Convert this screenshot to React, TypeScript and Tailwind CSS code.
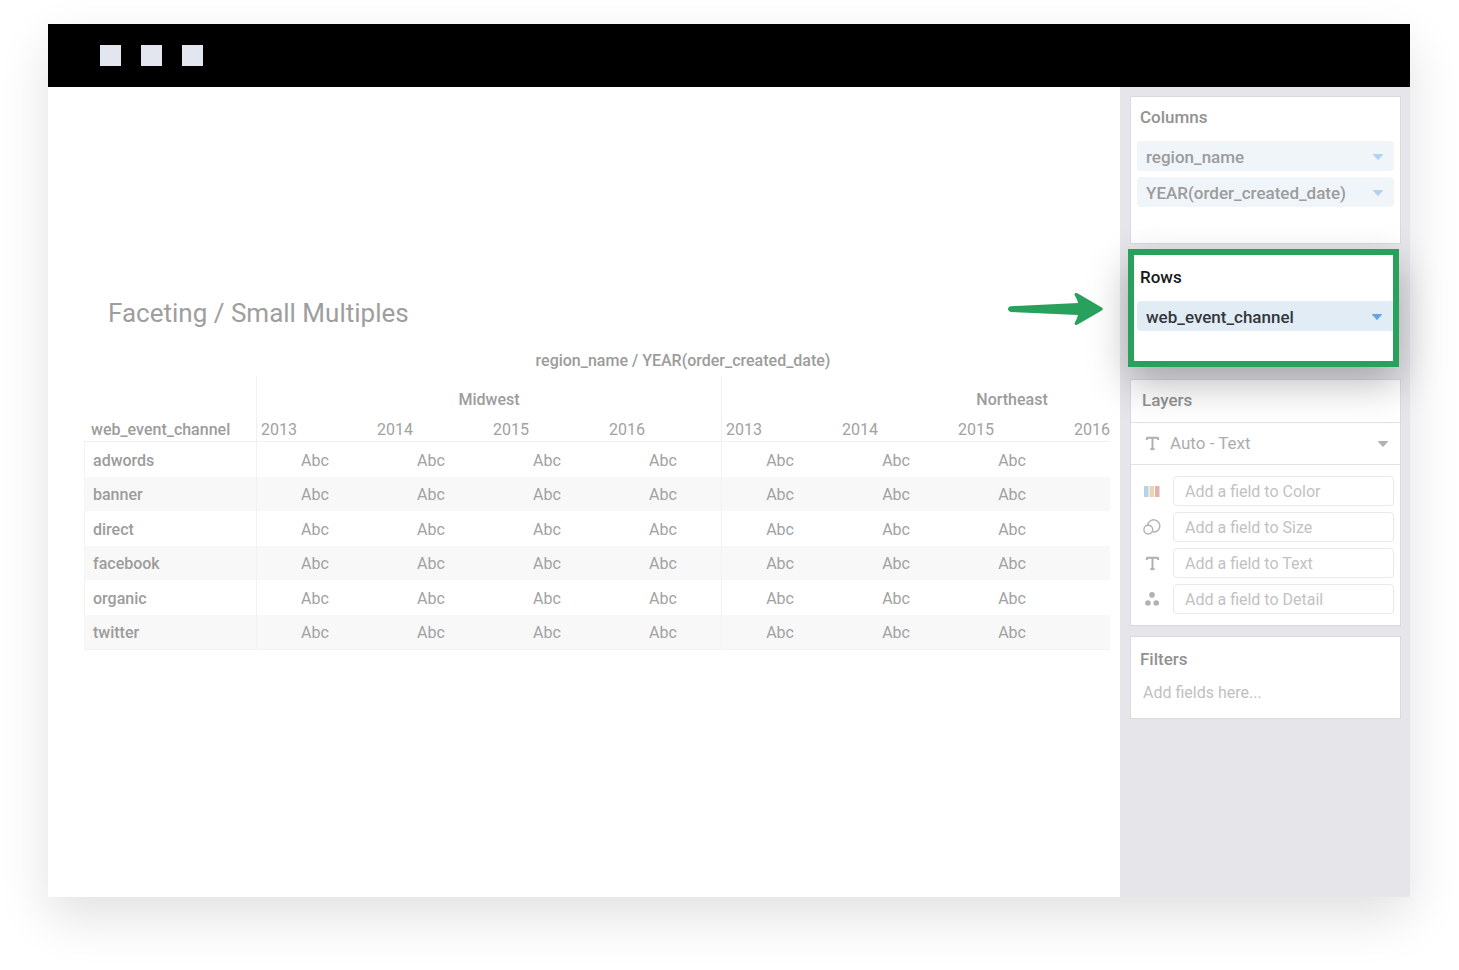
import type { ReactNode } from 'react';
import { Type } from 'lucide-react';

const channels = ['adwords', 'banner', 'direct', 'facebook', 'organic', 'twitter'];

// columns without a year or a mark keep their width but stay empty
const regions = [
  {
    name: 'Midwest',
    columns: [
      { year: '2013', mark: 'Abc' },
      { year: '2014', mark: 'Abc' },
      { year: '2015', mark: 'Abc' },
      { year: '2016', mark: 'Abc' },
    ],
  },
  {
    name: 'Northeast',
    columns: [
      { year: '2013', mark: 'Abc' },
      { year: '2014', mark: 'Abc' },
      { year: '2015', mark: 'Abc' },
      { year: '2016', mark: '' },
      { year: '', mark: '' },
    ],
  },
];

function Caret({ className }: { className: string }) {
  return (
    <svg viewBox="0 0 10 6" className={`h-[6px] w-[10px] shrink-0 ${className}`} fill="currentColor" aria-hidden="true">
      <path d="M0.4 0h9.2c.4 0 .5.4.3.7L5.6 5.6c-.3.4-.9.4-1.2 0L.1.7C-.1.4 0 0 .4 0z" />
    </svg>
  );
}

function TextIcon() {
  return <Type size={17} strokeWidth={2.8} strokeLinecap="butt" strokeLinejoin="miter" className="text-[#b0b0b3]" aria-hidden="true" />;
}

function ColorIcon() {
  return (
    <svg viewBox="0 0 16 11" className="h-[11px] w-4" aria-hidden="true">
      <rect x="0" width="4.5" height="11" rx="0.5" fill="#b5d3e8" />
      <rect x="5.5" width="4.5" height="11" rx="0.5" fill="#ecd5ac" />
      <rect x="11" width="4.5" height="11" rx="0.5" fill="#e6b0ac" />
    </svg>
  );
}

function SizeIcon() {
  return (
    <svg viewBox="0 0 18 16" className="h-4 w-[18px]" fill="none" stroke="#b2b2b5" strokeWidth="1.4" aria-hidden="true">
      <path d="M4.6 6.4A6.1 6.1 0 1 1 9.6 12.9" />
      <circle cx="5.3" cy="10.6" r="4.4" />
    </svg>
  );
}

function DetailIcon() {
  return (
    <svg viewBox="0 0 14 14" className="h-[14px] w-[14px]" fill="#b2b2b5" aria-hidden="true">
      <circle cx="7" cy="2.9" r="2.8" />
      <circle cx="2.9" cy="11" r="2.8" />
      <circle cx="11.2" cy="11" r="2.8" />
    </svg>
  );
}

const layerFields: { name: string; icon: ReactNode }[] = [
  { name: 'Color', icon: <ColorIcon /> },
  { name: 'Size', icon: <SizeIcon /> },
  { name: 'Text', icon: <TextIcon /> },
  { name: 'Detail', icon: <DetailIcon /> },
];

function FieldPill({ label, active = false }: { label: string; active?: boolean }) {
  return (
    <button
      type="button"
      className={`flex h-[30px] w-full items-center justify-between rounded pt-[2px] pr-[11px] pl-[9px] text-[17px] leading-5 font-medium ${
        active ? 'rounded-r-none bg-[#e2ecf4] text-[#33373c]' : 'bg-[#f0f5f9] text-[#9b9c9e]'
      }`}
    >
      <span>{label}</span>
      <Caret className={active ? 'text-[#62a4e8]' : 'text-[#b2d2f4]'} />
    </button>
  );
}

function PivotTable() {
  return (
    <div className="overflow-hidden">
      <table className="w-[1218px] table-fixed border-separate border-spacing-0 text-base leading-5 text-[#a2a2a2]">
        <colgroup>
          <col className="w-[172px]" />
          {regions.map((region) =>
            region.columns.map((_, i) => (
              <col key={`${region.name}-${i}`} className={i === 0 ? 'w-[117px]' : 'w-[116px]'} />
            ))
          )}
        </colgroup>
        <thead>
          <tr className="h-[38px]">
            <td />
            {regions.map((region) => (
              <th
                key={region.name}
                scope="colgroup"
                colSpan={region.columns.length}
                className="border-l border-[#f2f2f3] pb-1 align-bottom font-medium text-[#9c9c9c]"
              >
                {region.name}
              </th>
            ))}
          </tr>
          <tr className="h-7">
            <th scope="col" className="border-b border-[#f0f0f1] pb-px pl-[7px] text-left align-bottom font-medium text-[#9c9c9c]">
              web_event_channel
            </th>
            {regions.map((region) =>
              region.columns.map((column, i) => (
                <th
                  key={`${region.name}-${i}`}
                  scope="col"
                  className={`border-b border-[#f0f0f1] pb-px pl-1 text-left align-bottom font-normal ${i === 0 ? 'border-l' : ''}`}
                >
                  {column.year}
                </th>
              ))
            )}
          </tr>
        </thead>
        <tbody>
          {channels.map((channel) => (
            <tr key={channel} className="h-[34px] odd:h-[35px] even:bg-[#f8f8f9]">
              <th scope="row" className="border-l border-[#f2f2f3] pt-[2px] pl-2 text-left font-medium text-[#9c9c9c]">
                {channel}
              </th>
              {regions.map((region) =>
                region.columns.map((column, i) => (
                  <td
                    key={`${region.name}-${i}`}
                    className={`border-[#f2f2f3] pt-[2px] text-center ${i === 0 ? 'border-l' : ''}`}
                  >
                    {column.mark}
                  </td>
                ))
              )}
            </tr>
          ))}
        </tbody>
      </table>
      <div className="h-px bg-[#f2f2f3]" />
    </div>
  );
}

function Arrow() {
  return (
    <svg
      viewBox="0 0 95 32"
      className="absolute top-[38px] right-full mr-[31px] h-8 w-[95px]"
      fill="#28a15c"
      aria-hidden="true"
    >
      <path d="M3 13.2L70 9.9C69.400 7.200 68.200 4.800 66.800 2.600C65.700 .8 67.500-.6 69.400.3L93.800 14.600C95.200 15.400 95.200 16.800 93.800 17.600L69.600 31.600C67.600 32.700 65.900 31.300 67 29.300C68.300 27 69.300 24.700 69.900 22L3 18.900C-1 18.400-1 13.600 3 13.200Z" />
    </svg>
  );
}

function Sidebar() {
  return (
    <aside className="flex w-[290px] shrink-0 flex-col bg-[#e5e5ea] pt-[9px] pr-[9px] pl-[10px]">
      <section className="border border-[#d9d9df] bg-white px-[6px] pt-[10px] pb-9">
        <h2 className="px-[3px] text-[17px] leading-5 font-medium text-[#929292]">Columns</h2>
        <div className="mt-[14px] flex flex-col gap-[6px]">
          <FieldPill label="region_name" />
          <FieldPill label="YEAR(order_created_date)" />
        </div>
      </section>

      {/* highlighted shelf, its shadow falls over the panels below */}
      <section className="relative mt-[5px] mr-[2px] -ml-[2px] border-[6px] border-[#28a15c] bg-white pt-3 pb-[30px] pl-[3px] shadow-[0_16px_40px_rgba(0,0,0,0.28)]">
        <h2 className="px-[3px] text-[17px] leading-5 font-medium text-[#17181a]">Rows</h2>
        <div className="mt-[14px]">
          <FieldPill label="web_event_channel" active />
        </div>
        <Arrow />
      </section>

      <section className="mt-3 border border-[#d9d9df] bg-white">
        <h2 className="border-b border-[#e2e2e4] px-[11px] pt-[10px] pb-3 text-[17px] leading-5 font-medium text-[#929292]">
          Layers
        </h2>
        <div className="relative flex h-[42px] items-center border-b border-[#e2e2e4]">
          <span className="absolute left-[13px] flex">
            <TextIcon />
          </span>
          <select
            aria-label="Layer type"
            className="h-full w-full appearance-none bg-transparent pb-[2px] pl-[39px] text-[17px] leading-5 text-[#adadad]"
          >
            <option>Auto - Text</option>
          </select>
          <span className="pointer-events-none absolute right-3 flex">
            <Caret className="text-[#b2b2b4]" />
          </span>
        </div>
        <div className="flex flex-col gap-[6px] py-[11px] pr-[6px]">
          {layerFields.map((field) => (
            <label key={field.name} className="flex items-center">
              <span className="flex w-[42px] justify-center">{field.icon}</span>
              <input
                type="text"
                aria-label={field.name}
                placeholder={`Add a field to ${field.name}`}
                className="h-[30px] min-w-0 flex-1 rounded-sm border border-[#e9e9eb] bg-white px-[11px] text-base leading-5 placeholder:text-[#c2c2c4]"
              />
            </label>
          ))}
        </div>
      </section>

      <section className="mt-[10px] border border-[#d9d9df] bg-white px-[9px] pt-3 pb-[14px]">
        <h2 className="text-[17px] leading-5 font-medium text-[#929292]">
          <label htmlFor="filters">Filters</label>
        </h2>
        <input
          id="filters"
          type="text"
          placeholder="Add fields here..."
          className="mt-[11px] block h-6 w-full bg-transparent px-[3px] text-base leading-5 placeholder:text-[#bfbfc1]"
        />
      </section>
    </aside>
  );
}

export default function App() {
  return (
    <div className="flex min-h-screen flex-col bg-white pt-6 pr-[49px] pb-[73px] pl-12 font-[Roboto,'Liberation_Sans',sans-serif]">
      <div className="flex flex-1 flex-col shadow-[0_20px_48px_rgba(0,0,0,0.12)]">
        <header className="flex h-[63px] items-center gap-5 bg-black px-[52px]">
          <span className="size-[21px] bg-[#e4e6ef]" />
          <span className="size-[21px] bg-[#e4e6ef]" />
          <span className="size-[21px] bg-[#e4e6ef]" />
        </header>
        <div className="flex flex-1">
          <main className="min-w-0 flex-1 bg-white pt-[210px] pr-[10px] pl-9">
            <h1 className="pl-6 text-[26px] leading-8 text-[#9e9e9e]">Faceting / Small Multiples</h1>
            <p className="mt-[22px] mb-[5px] pl-[172px] text-center text-base leading-5 font-medium text-[#9c9c9c]">
              region_name / YEAR(order_created_date)
            </p>
            <PivotTable />
          </main>
          <Sidebar />
        </div>
      </div>
    </div>
  );
}
